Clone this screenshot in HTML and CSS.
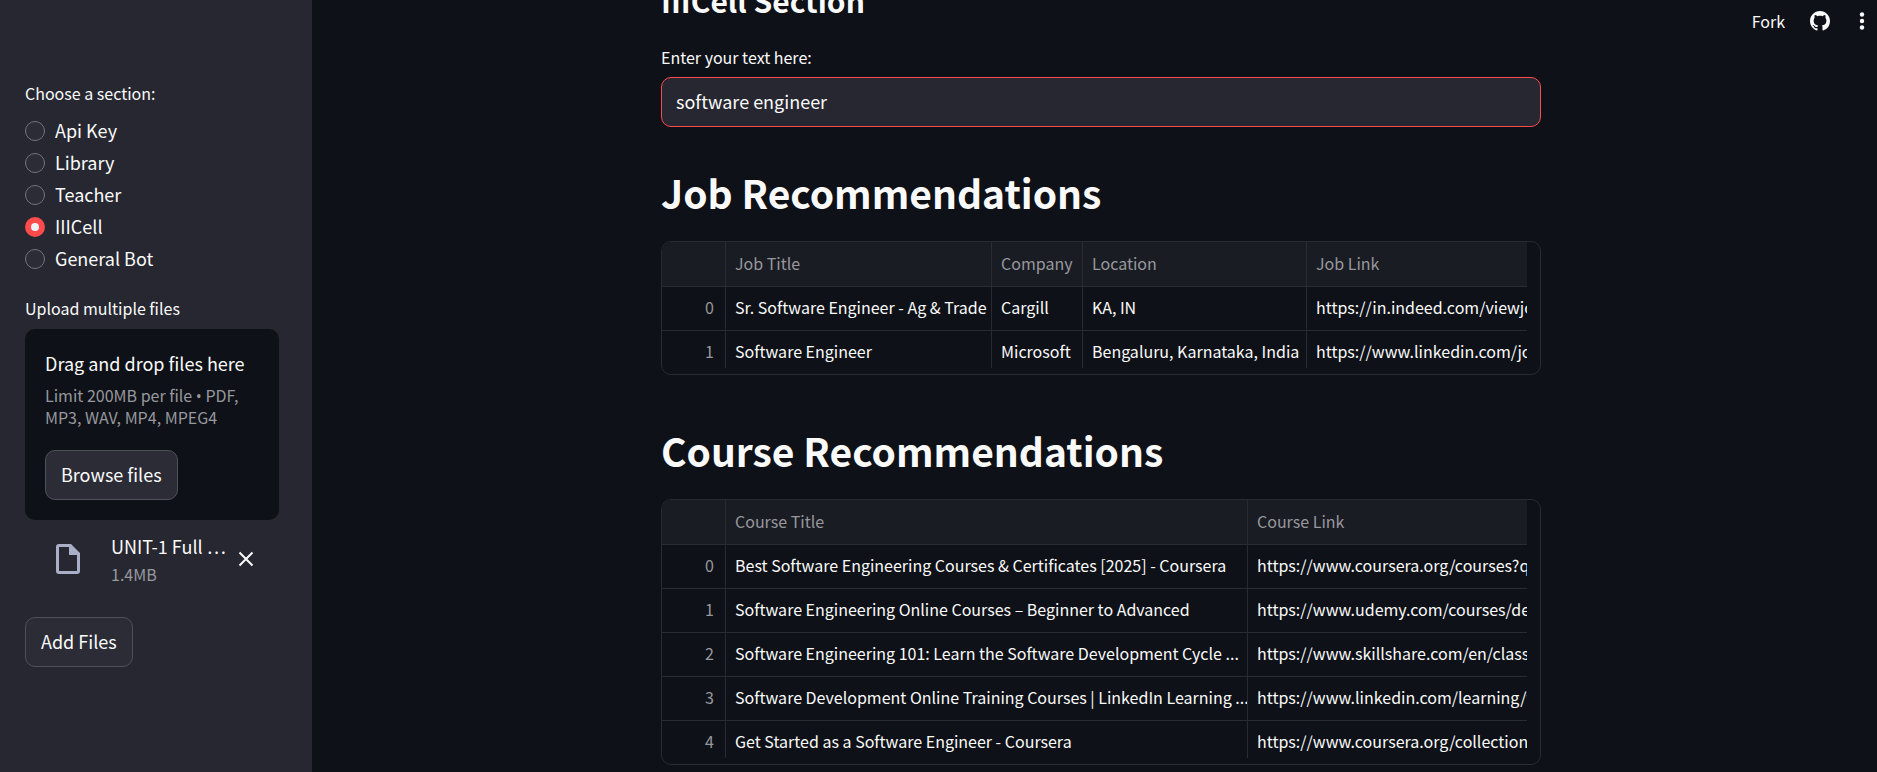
FILE: index.html
```html
<!DOCTYPE html>
<html lang="en">
<head>
<meta charset="utf-8">
<meta name="viewport" content="width=device-width, initial-scale=1">
<title>IIICell Section</title>
<link rel="stylesheet" href="styles.css">
</head>
<body>
<div class="app">
  <aside class="sidebar">
    <fieldset class="sections">
      <legend class="label">Choose a section:</legend>
      <label class="option"><input type="radio" name="section"><span>Api Key</span></label>
      <label class="option"><input type="radio" name="section"><span>Library</span></label>
      <label class="option"><input type="radio" name="section"><span>Teacher</span></label>
      <label class="option"><input type="radio" name="section" checked><span>IIICell</span></label>
      <label class="option"><input type="radio" name="section"><span>General Bot</span></label>
    </fieldset>

    <section class="uploader" aria-labelledby="upload-label">
      <p class="label" id="upload-label">Upload multiple files</p>
      <div class="dropzone">
        <p class="dropzone-title">Drag and drop files here</p>
        <p class="note">Limit 200MB per file <span class="bullet">•</span> PDF, MP3, WAV, MP4, MPEG4</p>
        <button type="button" class="button">Browse files</button>
      </div>
      <div class="file">
        <svg class="file-icon" viewBox="0 0 24 30" aria-hidden="true">
          <path fill-rule="evenodd" d="M3 0H15L24 9V27Q24 30 21 30H3Q0 30 0 27V3Q0 0 3 0ZM3 3V27H21V11H13V3Z"/>
        </svg>
        <div class="file-text">
          <p class="file-name">UNIT-1 Full …</p>
          <p class="note">1.4MB</p>
        </div>
        <button type="button" class="remove" aria-label="Remove file">
          <svg viewBox="0 0 16 16" aria-hidden="true"><path d="M1.500 1.500L14.500 14.500M14.500 1.500L1.500 14.500"/></svg>
        </button>
      </div>
    </section>

    <button type="button" class="button">Add Files</button>
  </aside>

  <main class="main">
    <div class="content">
      <h2>IIICell Section</h2>
      <label class="label" for="query">Enter your text here:</label>
      <input class="query" id="query" type="text" value="software engineer">

      <h1>Job Recommendations</h1>
      <div class="frame"><div class="scroller">
        <table class="grid">
          <colgroup><col class="col-index"><col class="col-job"><col class="col-company"><col class="col-location"><col></colgroup>
          <thead><tr><th></th><th>Job Title</th><th>Company</th><th>Location</th><th>Job Link</th></tr></thead>
          <tbody>
            <tr><td>0</td><td>Sr. Software Engineer - Ag &amp; Trade</td><td>Cargill</td><td>KA, IN</td><td>https://in.indeed.com/viewjob</td></tr>
            <tr><td>1</td><td>Software Engineer</td><td>Microsoft</td><td>Bengaluru, Karnataka, India</td><td>https://www.linkedin.com/jobs</td></tr>
          </tbody>
        </table>
      </div></div>

      <h1>Course Recommendations</h1>
      <div class="frame"><div class="scroller">
        <table class="grid">
          <colgroup><col class="col-index"><col class="col-course"><col></colgroup>
          <thead><tr><th></th><th>Course Title</th><th>Course Link</th></tr></thead>
          <tbody>
            <tr><td>0</td><td>Best Software Engineering Courses &amp; Certificates [2025] - Coursera</td><td>https://www.coursera.org/courses?query</td></tr>
            <tr><td>1</td><td>Software Engineering Online Courses – Beginner to Advanced</td><td>https://www.udemy.com/courses/development</td></tr>
            <tr><td>2</td><td>Software Engineering 101: Learn the Software Development Cycle ...</td><td>https://www.skillshare.com/en/classes</td></tr>
            <tr><td>3</td><td>Software Development Online Training Courses | LinkedIn Learning ...</td><td>https://www.linkedin.com/learning/topics</td></tr>
            <tr><td>4</td><td>Get Started as a Software Engineer - Coursera</td><td>https://www.coursera.org/collections</td></tr>
          </tbody>
        </table>
      </div></div>
    </div>
  </main>

  <header class="toolbar">
    <a class="fork" href="#fork">Fork</a>
    <a class="tool" href="#github" aria-label="GitHub">
      <svg class="github" viewBox="0 0 16 16" aria-hidden="true"><path d="M8 0C3.580 0 0 3.580 0 8c0 3.540 2.290 6.530 5.470 7.590.4.070.55-.17.55-.38 0-.19-.01-.82-.01-1.490-2.010.37-2.530-.49-2.690-.94-.09-.23-.48-.94-.82-1.130-.28-.15-.68-.52-.01-.53.63-.01 1.080.58 1.230.82.72 1.210 1.870.87 2.330.66.07-.52.28-.87.51-1.070-1.780-.2-3.640-.89-3.640-3.950 0-.87.31-1.590.82-2.150-.08-.2-.36-1.020.08-2.120 0 0 .67-.21 2.200.82.64-.18 1.320-.27 2-.27s1.360.09 2 .27c1.530-1.040 2.200-.82 2.200-.82.44 1.100.16 1.920.08 2.120.51.56.82 1.270.82 2.150 0 3.070-1.870 3.750-3.650 3.950.29.25.54.73.54 1.480 0 1.070-.01 1.930-.01 2.200 0 .21.15.46.55.38A8.010 8.010 0 0 0 16 8c0-4.420-3.580-8-8-8z"/></svg>
    </a>
    <button type="button" class="tool" aria-label="Menu">
      <svg class="dots" viewBox="0 0 6 20" aria-hidden="true"><circle cx="3" cy="3.500" r="2.200"/><circle cx="3" cy="10" r="2.200"/><circle cx="3" cy="16.500" r="2.200"/></svg>
    </button>
  </header>
</div>
</body>
</html>
```
FILE: styles.css
```css
:root {
  --bg: #0e1117;
  --panel: #262730;
  --control: #2b2c36;
  --text: #fafafa;
  --muted: #97989d;
  --line: #292b31;
  --accent: #ff4b4b;
}

* { box-sizing: border-box; }

body {
  margin: 0;
  background: var(--bg);
  color: var(--text);
  font: 18px/24px "Source Sans Pro", "Noto Sans CJK SC", sans-serif;
}

p, h1, h2, fieldset, legend { margin: 0; padding: 0; border: 0; }

button, input { font: inherit; color: inherit; }

.app {
  display: flex;
  height: 100vh;
  overflow: hidden;
  position: relative;
}

.label {
  display: block;
  font-size: 16px;
  line-height: 24px;
}

/* Sidebar */
.sidebar {
  flex: none;
  width: 312px;
  padding: 81px 33px 0 25px;
  background: var(--panel);
}

.sections {
  display: flex;
  flex-direction: column;
  gap: 8px;
}

.sections .label { margin-bottom: 14px; }

.option {
  display: flex;
  align-items: center;
  gap: 10px;
}

.option span {
  padding-bottom: 2px;
  line-height: 22px;
}

.option input {
  appearance: none;
  width: 20px;
  height: 20px;
  margin: 0;
  border: 1px solid #73747b;
  border-radius: 50%;
  background: var(--control);
}

.option input:checked {
  border: 6px solid var(--accent);
  background: #f0f2f6;
}

.uploader { margin: 25px 0 32px; }

.dropzone {
  margin-top: 9px;
  padding: 22px 20px 20px;
  border-radius: 10px;
  background: var(--bg);
}

.note {
  font-size: 16px;
  line-height: 22px;
  color: var(--muted);
}

.bullet {
  font-family: "Open Sans", sans-serif;
  line-height: 16px;
}

.dropzone-title { margin-bottom: 9px; }

.button {
  height: 50px;
  padding: 0 15px 2px;
  border: 1px solid #4f5058;
  border-radius: 10px;
  background: var(--control);
}

.dropzone .button { display: block; margin-top: 22px; }

.file {
  display: flex;
  align-items: center;
  padding: 12px 20px 0 31px;
}

.file-icon {
  flex: none;
  width: 24px;
  height: 30px;
  margin-right: 31px;
  fill: #a9afc6;
}

.file-text {
  flex: 1;
  display: grid;
  gap: 3px;
  min-width: 0;
  white-space: nowrap;
}

.file-name { line-height: 28px; }

.remove {
  flex: none;
  padding: 0 5px;
  border: 0;
  background: none;
}

.remove svg {
  display: block;
  width: 16px;
  height: 16px;
  fill: none;
  stroke: var(--text);
  stroke-width: 2;
}

/* Main column */
.main {
  flex: 1;
  min-width: 0;
  padding: 0 20px 0 33px;
}

.content {
  max-width: 880px;
  margin: -22px auto 0;
}

h2 {
  margin-bottom: 23px;
  font-size: 30px;
  line-height: 44px;
  font-weight: 700;
}

h1 {
  padding: 36px 0 20px;
  font-size: 39px;
  line-height: 58px;
  font-weight: 700;
}

.query {
  display: block;
  width: 100%;
  height: 50px;
  margin-top: 8px;
  padding: 0 14px 2px;
  border: 1px solid var(--accent);
  border-radius: 10px;
  outline: 0;
  background: var(--panel);
}

.frame {
  padding: 0 13px 6px 0;
  border: 1px solid var(--line);
  border-radius: 10px;
  overflow: hidden;
  margin-bottom: 10px;
}

.scroller { overflow: hidden; }

.grid {
  width: 1000px;
  margin-bottom: -7px;
  table-layout: fixed;
  border-collapse: separate;
  border-spacing: 0;
  font-size: 16px;
  line-height: 41px;
  text-align: left;
  white-space: nowrap;
}

.grid th, .grid td {
  height: 44px;
  padding: 0 0 2px 9px;
  border-right: 1px solid var(--line);
  border-bottom: 1px solid var(--line);
  overflow: hidden;
}

.grid th {
  height: 45px;
  background: #1a1c23;
  color: var(--muted);
  font-weight: 400;
}

.grid td:first-child {
  padding: 0 11px 2px 0;
  color: var(--muted);
  text-align: right;
}

.col-index { width: 64px; }
.col-job { width: 266px; }
.col-company { width: 91px; }
.col-location { width: 224px; }
.col-course { width: 522px; }

/* Toolbar floats over the scrolled page */
.toolbar {
  position: absolute;
  top: 0;
  right: 12px;
  display: flex;
  align-items: center;
  height: 42px;
}

.fork {
  margin-right: 25px;
  font-size: 16px;
  color: inherit;
  text-decoration: none;
}

.tool {
  padding: 0;
  border: 0;
  background: none;
  fill: var(--text);
}

.tool svg { display: block; height: 20px; fill: var(--text); }

.github { width: 20px; margin-right: 29px; }

.dots { width: 6px; }
```
